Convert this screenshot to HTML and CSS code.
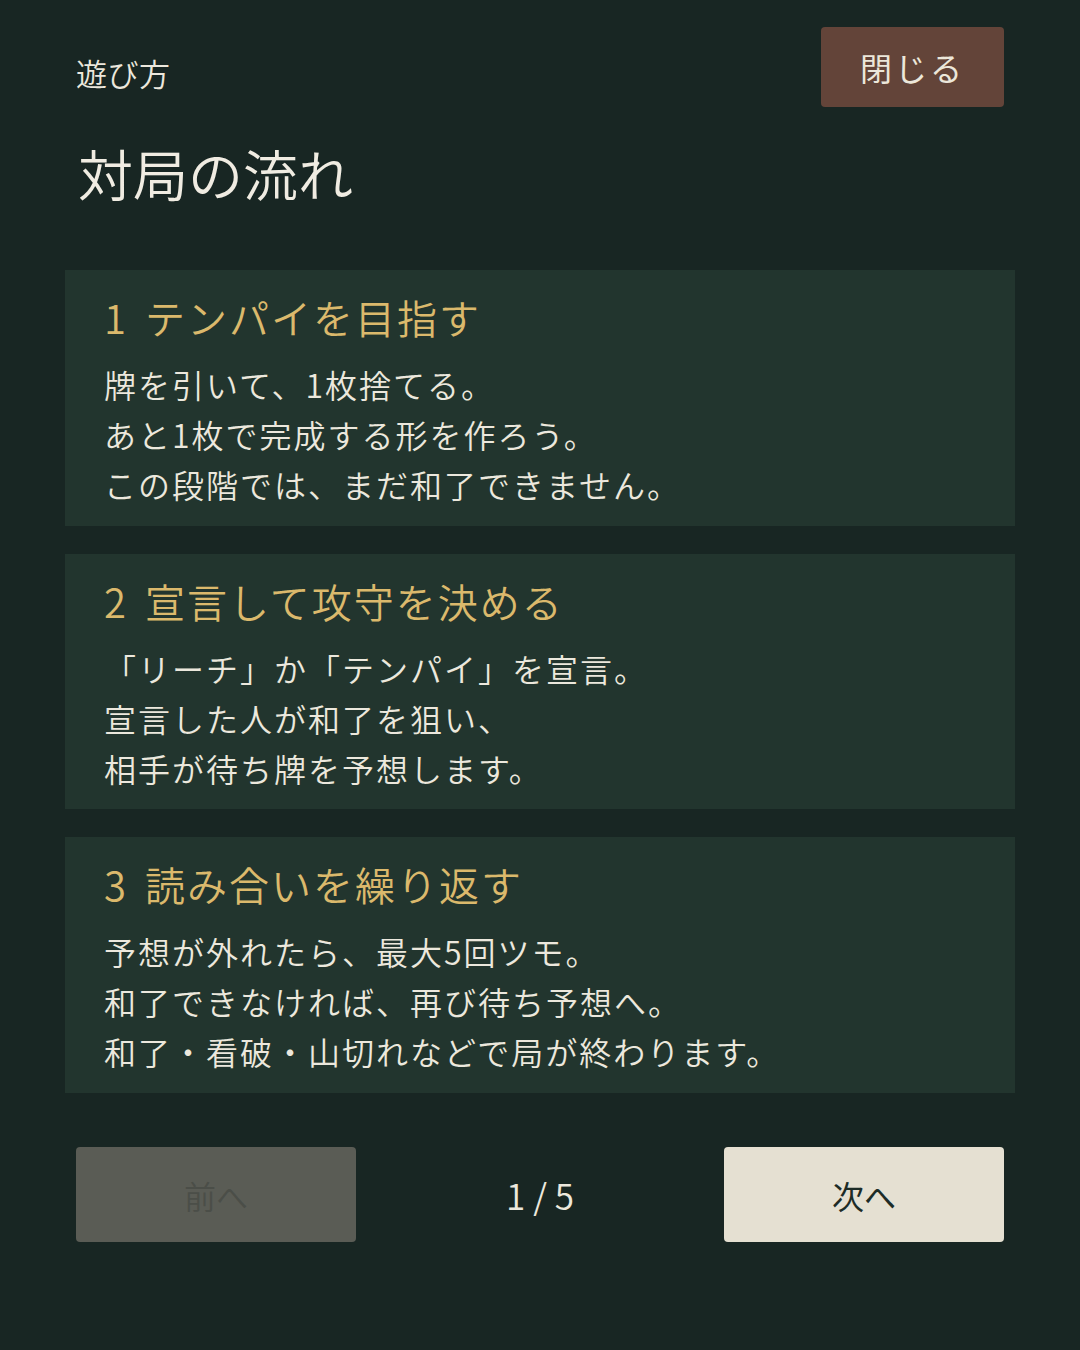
FILE: index.html
```html
<!DOCTYPE html>
<html lang="ja">
<head>
<meta charset="utf-8">
<link rel="stylesheet" href="styles.css">
</head>
<body>
<div class="page">
  <header class="top">
    <div class="head-text">
      <div class="eyebrow">遊び方</div>
      <h1 class="title">対局の流れ</h1>
    </div>
    <button class="close">閉じる</button>
  </header>
  <main class="cards">
    <section class="card">
      <h2 class="card-title"><span class="num">1</span>テンパイを目指す</h2>
      <p class="card-body">牌を引いて、1枚捨てる。<br>あと1枚で完成する形を作ろう。<br>この段階では、まだ和了できません。</p>
    </section>
    <section class="card">
      <h2 class="card-title"><span class="num">2</span>宣言して攻守を決める</h2>
      <p class="card-body">「リーチ」か「テンパイ」を宣言。<br>宣言した人が和了を狙い、<br>相手が待ち牌を予想します。</p>
    </section>
    <section class="card">
      <h2 class="card-title"><span class="num">3</span>読み合いを繰り返す</h2>
      <p class="card-body">予想が外れたら、最大5回ツモ。<br>和了できなければ、再び待ち予想へ。<br>和了・看破・山切れなどで局が終わります。</p>
    </section>
  </main>
  <nav class="pager">
    <button class="btn prev" disabled>前へ</button>
    <div class="count">1 / 5</div>
    <button class="btn next">次へ</button>
  </nav>
</div>
</body>
</html>
```

FILE: styles.css
```css
* { box-sizing: border-box; }
html, body {
  margin: 0;
  padding: 0;
  background: #182623;
}
body {
  width: 1080px;
  height: 1350px;
  font-family: "Noto Sans CJK JP", "Noto Sans", sans-serif;
  font-weight: 350;
  color: #ece8dd;
}
.page {
  padding: 27px 65px 0 65px;
}
.top {
  display: flex;
  justify-content: space-between;
  align-items: flex-start;
  padding: 0 11px;
}
.head-text {
  padding-top: 24px;
}
.eyebrow {
  font-size: 31px;
  line-height: 44px;
  color: #ece8dd;
  letter-spacing: 0.5px;
}
.title {
  margin: 42px 0 0 2px;
  font-size: 55px;
  line-height: 70px;
  font-weight: 350;
  color: #f0ece2;
  letter-spacing: 0;
}
.close {
  width: 183px;
  height: 80px;
  border: none;
  border-radius: 4px;
  background: #634439;
  color: #ece7da;
  font-family: inherit;
  font-weight: 400;
  font-size: 32px;
  letter-spacing: 3px;
  padding: 0;
}
.cards {
  margin-top: 63px;
  display: flex;
  flex-direction: column;
  gap: 28px;
}
.card {
  background: #22352e;
  height: 255.5px;
  padding: 19px 39px 0 39px;
}
.card-title {
  margin: 0;
  font-size: 40px;
  line-height: 56px;
  font-weight: 350;
  color: #dbb96c;
  letter-spacing: 2px;
}
.num {
  margin-right: 17px;
}
.card-body {
  margin: 14px 0 0 0;
  font-size: 32px;
  line-height: 50px;
  color: #ece8dd;
  letter-spacing: 2px;
}
.pager {
  margin-top: 54.5px;
  display: flex;
  justify-content: space-between;
  align-items: center;
  padding: 0 11px;
}
.btn {
  width: 280px;
  height: 95px;
  border: none;
  border-radius: 4px;
  font-family: inherit;
  font-weight: 350;
  font-size: 32px;
  padding: 0;
}
.prev {
  background: #5a5c55;
  color: #4b4e48;
}
.next {
  background: #e5e0d2;
  color: #1d2c27;
  font-weight: 400;
}
.count {
  font-size: 35px;
  color: #ece8dd;
  letter-spacing: 0;
}
```
